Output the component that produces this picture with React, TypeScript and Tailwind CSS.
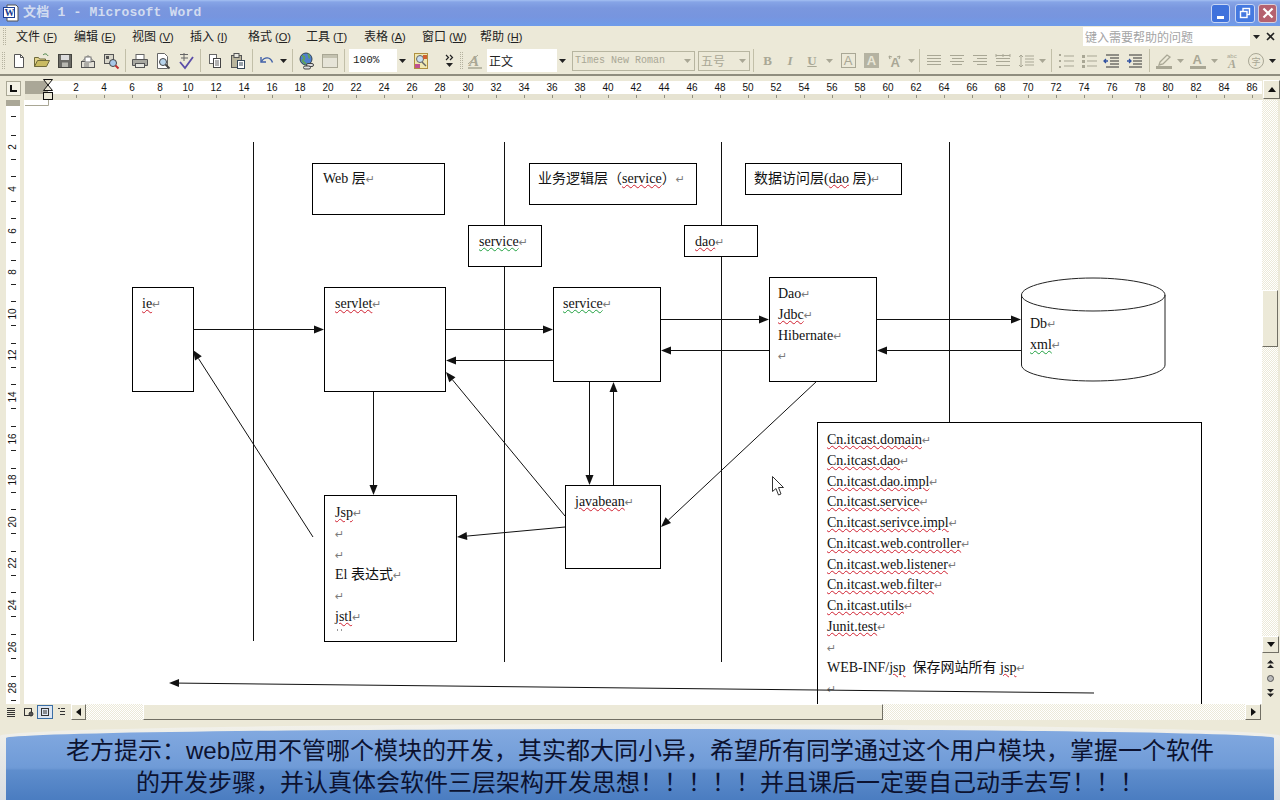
import type { ReactNode } from "react"

const serif = "font-['Liberation_Serif','Noto_Sans_CJK_SC',serif]"
const ui = "font-['Noto_Sans_CJK_SC','Liberation_Sans',sans-serif]"
const arial = "font-['Liberation_Sans','Noto_Sans_CJK_SC',sans-serif]"
const grey = "#a9a795"
const dither = "bg-[repeating-conic-gradient(#ece9d8_0%_25%,#ffffff_0%_50%)] bg-[length:2px_2px]"
const raised = "border border-t-white border-l-white border-r-[#716f64] border-b-[#716f64] bg-[#ece9d8]"

function Mark() {
  return <span className="font-['DejaVu_Sans',sans-serif] text-[11px] text-[#7c7c7c]">↵</span>
}

function Red({ children }: { children: ReactNode }) {
  return <span className="underline decoration-wavy decoration-[#d02030] decoration-1 underline-offset-[1px]">{children}</span>
}

function Green({ children }: { children: ReactNode }) {
  return <span className="underline decoration-wavy decoration-[#20a040] decoration-1 underline-offset-[1px]">{children}</span>
}

function Line({ children }: { children?: ReactNode }) {
  return (
    <div className="h-[20.75px] whitespace-nowrap">
      {children}
      <Mark />
    </div>
  )
}

function Box({ className, children }: { className: string; children: ReactNode }) {
  return (
    <div className={`absolute overflow-hidden border border-black bg-white text-[14px] leading-[20.75px] text-[#111] ${serif} ${className}`}>
      {children}
    </div>
  )
}

function Arrow({ x1, y1, x2, y2 }: { x1: number; y1: number; x2: number; y2: number }) {
  const a = Math.atan2(y2 - y1, x2 - x1)
  const px = x2 - 10 * Math.cos(a)
  const py = y2 - 10 * Math.sin(a)
  const nx = 4 * Math.sin(a)
  const ny = 4 * Math.cos(a)
  return (
    <g>
      <line x1={x1} y1={y1} x2={px} y2={py} stroke="#111" strokeWidth="1" />
      <polygon points={`${x2},${y2} ${px + nx},${py - ny} ${px - nx},${py + ny}`} fill="#111" />
    </g>
  )
}

function Grip({ className = "mx-[3px]" }: { className?: string }) {
  return <div className={`h-[17px] w-[3px] border-x border-dotted border-[#b5b29f] ${className}`} />
}

function Sep() {
  return (
    <div className="flex w-[6px] justify-center">
      <div className="h-[23px] w-px bg-[#c2bfa8]" />
    </div>
  )
}

function Drop({ color = "#222", w = "w-[11px]" }: { color?: string; w?: string }) {
  return (
    <div className={`flex h-[23px] items-center justify-center ${w}`}>
      <svg width="7" height="4" viewBox="0 0 7 4">
        <path d="M0 0h7L3.5 4z" fill={color} />
      </svg>
    </div>
  )
}

function Tool({ children, w = "w-[23px]" }: { children: ReactNode; w?: string }) {
  return (
    <div className={`flex h-[23px] items-center justify-center ${w}`}>
      <svg width="18" height="18" viewBox="0 0 18 18">
        {children}
      </svg>
    </div>
  )
}

function Lines({ rows, color = grey }: { rows: [number, number][]; color?: string }) {
  return (
    <>
      {rows.map(([x, w], i) => (
        <rect key={i} x={x} y={3 + i * 3} width={w} height="1" fill={color} />
      ))}
    </>
  )
}

function TitleBar() {
  return (
    <div className="flex h-[26px] shrink-0 items-center bg-[linear-gradient(#a4c0f2_0,#86a4e6_2px,#7a97de_8px,#7795df_17px,#6f9be9_25px)] pl-[3px] pr-[3px]">
      <svg width="16" height="18" viewBox="0 0 16 18" className="shrink-0">
        <path d="M4 1h9l2 2v14H4z" fill="#fff" stroke="#555" strokeWidth="1" />
        <rect x="0.5" y="3.5" width="11" height="10" fill="#fff" stroke="#1c3f94" />
        <text x="1.5" y="12" fontSize="10" fontWeight="700" fill="#1c3f94" fontFamily="Liberation Serif">W</text>
      </svg>
      <div className="ml-[4px] flex-1 whitespace-nowrap font-['Liberation_Mono','Noto_Sans_CJK_SC',monospace] text-[13px] font-bold tracking-[0.2px] text-[#d2dcf0]">
        文档 1 - Microsoft Word
      </div>
      <div className="flex items-center gap-[3px]">
        <div className="mr-[2px] flex h-[19px] w-[19px] items-end rounded-[3px] border border-[#c8d6f4] bg-[#3f72dc] pb-[3px] pl-[5px]">
          <div className="h-[3px] w-[7px] bg-white" />
        </div>
        <div className="flex h-[19px] w-[20px] items-center justify-center rounded-[3px] border border-[#c8d6f4] bg-[#4479e0]">
          <svg width="12" height="12" viewBox="0 0 12 12" fill="none" stroke="#fff">
            <rect x="4" y="1.5" width="6.5" height="6" strokeWidth="1.4" />
            <rect x="1.5" y="4.5" width="6.5" height="6" fill="#4479e0" strokeWidth="1.4" />
          </svg>
        </div>
        <div className="flex h-[19px] w-[19px] items-center justify-center rounded-[3px] border border-[#d8d0dc] bg-[#b5616f]">
          <svg width="12" height="12" viewBox="0 0 12 12" stroke="#fff" strokeWidth="2.2">
            <path d="M1.5 1.5l9 9M10.5 1.5l-9 9" />
          </svg>
        </div>
      </div>
    </div>
  )
}

const menus = [
  ["文件", "F"],
  ["编辑", "E"],
  ["视图", "V"],
  ["插入", "I"],
  ["格式", "O"],
  ["工具", "T"],
  ["表格", "A"],
  ["窗口", "W"],
  ["帮助", "H"],
]

function MenuBar() {
  return (
    <div className={`flex h-[21px] shrink-0 items-center bg-[#ece9d8] text-[12px] text-[#222] ${ui}`}>
      <Grip />
      <div className="ml-[7px] flex flex-1">
        {menus.map(([t, k]) => (
          <div key={k} className="w-[58px] whitespace-nowrap">
            {t}
            <span className={`ml-[3px] text-[11px] ${arial}`}>
              (<span className="underline">{k}</span>)
            </span>
          </div>
        ))}
      </div>
      <div className="flex h-[19px] w-[167px] items-center bg-white pl-[2px] text-[12px] text-[#a4a4a4]">键入需要帮助的问题</div>
      <Drop w="w-[12px]" />
      <div className="ml-[3px] mr-[4px] flex h-[19px] w-[11px] items-center justify-center">
        <svg width="9" height="9" viewBox="0 0 9 9" stroke="#222" strokeWidth="1.6">
          <path d="M1 1l7 7M8 1L1 8" />
        </svg>
      </div>
    </div>
  )
}

function ToolBar() {
  return (
    <div className={`flex h-[29px] shrink-0 items-center border-b-2 border-[#8f8d7e] bg-[#ece9d8] ${arial}`}>
      <Grip className="mx-[2px]" />
      <Tool>
        <path d="M4.500 2.500h6l3 3v10h-9z" fill="#fff" stroke="#555" />
        <path d="M10.500 2.500v3h3" fill="none" stroke="#555" />
      </Tool>
      <Tool>
        <path d="M1.500 14.500v-9h4l1 1.500h6v2" fill="#e3d48c" stroke="#6f6a3a" />
        <path d="M1.500 14.500l3-6h12l-3 6z" fill="#c9bb62" stroke="#6f6a3a" />
        <path d="M10 3c2-2 4-1 5 1" fill="none" stroke="#3f7f3f" />
      </Tool>
      <Tool>
        <rect x="2.500" y="2.500" width="13" height="13" fill="#6b6b66" stroke="#44443f" />
        <rect x="5" y="3" width="8" height="5" fill="#ddd" />
        <rect x="6" y="10.500" width="6" height="4.500" fill="#b8b8b0" />
      </Tool>
      <Tool>
        <path d="M3 9.500l6-6 6 6" fill="none" stroke="#777" />
        <rect x="2.500" y="9.500" width="13" height="6" fill="#e4e2d8" stroke="#555" />
        <rect x="6" y="5" width="6" height="5" fill="#fff" stroke="#777" />
        <path d="M5 12h5M5 14h5" stroke="#777" />
      </Tool>
      <Tool>
        <rect x="2.500" y="2.500" width="9" height="9" fill="#d8d6ca" stroke="#555" />
        <rect x="4" y="4" width="3" height="3" fill="#555" />
        <circle cx="11" cy="11" r="3.500" fill="#a8c8e8" stroke="#444" />
        <path d="M13.500 13.500l3 3" stroke="#c03030" strokeWidth="2" />
      </Tool>
      <Sep />
      <Tool>
        <rect x="5" y="2.500" width="8" height="5" fill="#fff" stroke="#666" />
        <path d="M1.500 7.500h15v6h-15z" fill="#a8a8a0" stroke="#555" />
        <rect x="4.500" y="11.500" width="9" height="4" fill="#e8e8e0" stroke="#555" />
      </Tool>
      <Tool>
        <path d="M3.500 1.500h7l3 3v12h-10z" fill="#fff" stroke="#666" />
        <circle cx="9" cy="10" r="3.500" fill="#b8d4ec" stroke="#444" />
        <path d="M11.500 12.500l4 4" stroke="#444" strokeWidth="1.800" />
      </Tool>
      <Tool>
        <path d="M3 2.500h8M7 1v5M4 6h7M7 6v3" fill="none" stroke="#666" />
        <path d="M3 10l5 6 8-11" fill="none" stroke="#5a4ca8" strokeWidth="1.800" />
      </Tool>
      <Sep />
      <Tool>
        <rect x="3.500" y="2.500" width="7" height="9" fill="#fff" stroke="#666" />
        <rect x="7.500" y="6.500" width="7" height="9" fill="#fff" stroke="#444" />
        <path d="M9 9h4M9 11h4M9 13h4" stroke="#666" />
      </Tool>
      <Tool>
        <rect x="2.500" y="3.500" width="10" height="12" fill="#b8b49c" stroke="#555" />
        <rect x="5" y="1.500" width="5" height="4" fill="#e8e8e0" stroke="#555" />
        <rect x="8.500" y="8.500" width="7" height="8" fill="#fff" stroke="#345" />
        <path d="M10 11h4M10 13h4" stroke="#345" />
      </Tool>
      <Sep />
      <Tool>
        <path d="M3 5v5h5" fill="none" stroke="#3f5fa8" strokeWidth="1.400" />
        <path d="M3.500 9.500c3-5 9-5 11 1" fill="none" stroke="#3f5fa8" strokeWidth="1.400" />
      </Tool>
      <Drop />
      <Sep />
      <Tool>
        <circle cx="8" cy="7" r="6" fill="#4f7fd0" stroke="#345" />
        <path d="M4 4c3 0 3 3 1 4s2 3 3 4M10 2c2 2 0 3 2 4" fill="none" stroke="#5ea05e" strokeWidth="2" />
        <rect x="8.500" y="11.500" width="7" height="3" rx="1.500" fill="#ddd" stroke="#444" />
        <rect x="5.500" y="14" width="7" height="3" rx="1.500" fill="#ddd" stroke="#444" />
      </Tool>
      <Tool>
        <rect x="1.500" y="2.500" width="15" height="13" fill="#e6e4d8" stroke={grey} />
        <rect x="2" y="3" width="14" height="3" fill="#c4c2b0" />
      </Tool>
      <Sep />
      <div className="ml-[2px] flex h-[23px] w-[48px] items-center bg-white pl-[4px] font-['Liberation_Mono',monospace] text-[11px] text-[#222]">100%</div>
      <Drop w="w-[10px]" />
      <div className="w-[2px]" />
      <Tool>
        <rect x="2.500" y="1.500" width="13" height="15" fill="#f0e8b0" stroke="#b09040" />
        <circle cx="8" cy="7" r="3.500" fill="#c8dcf0" stroke="#666" />
        <path d="M10 10l4 4" stroke="#666" strokeWidth="1.500" />
        <rect x="3" y="12" width="5" height="4" fill="#c05090" />
        <rect x="11" y="3" width="4" height="4" fill="#d06030" />
      </Tool>
      <div className="flex h-[23px] w-[28px] flex-col items-center justify-center pl-[6px] leading-none">
        <svg width="9" height="7" viewBox="0 0 9 7" fill="none" stroke="#222" strokeWidth="1.200">
          <path d="M1 1l2.500 2.500L1 6M5 1l2.500 2.500L5 6" />
        </svg>
        <svg width="7" height="4" viewBox="0 0 7 4" className="mt-[2px]">
          <path d="M0 0h7L3.5 4z" fill="#222" />
        </svg>
      </div>
      <Grip className="" />
      <Tool>
        <text x="3" y="14" fontSize="15" fontStyle="italic" fontWeight="700" fill={grey} fontFamily="Liberation Serif">A</text>
        <path d="M2 16h14" stroke={grey} strokeWidth="1.500" />
        <path d="M2 12L12 3" stroke={grey} />
      </Tool>
      <div className="ml-[1px] flex h-[23px] w-[70px] items-center bg-white pl-[2px] text-[12px] text-[#222]">
        <span className={ui}>正文</span>
      </div>
      <Drop w="w-[10px]" />
      <div className="ml-[5px] flex h-[20px] w-[123px] items-center justify-between border border-[#b7b5a0] pl-[2px] pr-[3px] font-['Liberation_Mono',monospace] text-[10px] text-[#a9a795]">
        Times New Roman
        <svg width="7" height="4" viewBox="0 0 7 4">
          <path d="M0 0h7L3.5 4z" fill={grey} />
        </svg>
      </div>
      <div className={`ml-[3px] flex h-[20px] w-[52px] items-center justify-between border border-[#b7b5a0] pl-[2px] pr-[3px] text-[12px] text-[#a9a795] ${ui}`}>
        五号
        <svg width="7" height="4" viewBox="0 0 7 4">
          <path d="M0 0h7L3.5 4z" fill={grey} />
        </svg>
      </div>
      <Sep />
      <div className={`flex h-[23px] w-[23px] items-center justify-center text-[13px] font-bold text-[#a9a795] ${serif}`}>B</div>
      <div className={`flex h-[23px] w-[22px] items-center justify-center text-[13px] font-bold italic text-[#a9a795] ${serif}`}>I</div>
      <div className={`flex h-[23px] w-[22px] items-center justify-center text-[13px] font-bold text-[#a9a795] underline ${serif}`}>U</div>
      <Drop color={grey} w="w-[13px]" />
      <div className="flex h-[23px] w-[24px] items-center justify-center">
        <div className={`flex h-[15px] w-[15px] items-center justify-center border border-[#a9a795] text-[13px] leading-none text-[#a9a795] ${arial}`}>A</div>
      </div>
      <div className="flex h-[23px] w-[23px] items-center justify-center">
        <div className={`flex h-[15px] w-[15px] items-center justify-center bg-[#b5b3a2] text-[13px] font-bold leading-none text-[#e8e6d6] ${arial}`}>A</div>
      </div>
      <Tool>
        <path d="M3 4l3 1M3 4l1 3M14 4l-3 1M14 4l-1 3" stroke={grey} strokeWidth="1.300" />
        <text x="4.500" y="15" fontSize="13" fontWeight="700" fill={grey} fontFamily="Liberation Sans">A</text>
      </Tool>
      <Drop color={grey} w="w-[10px]" />
      <Sep />
      <Tool>
        <Lines rows={[[2, 14], [2, 14], [2, 14], [2, 14]]} />
      </Tool>
      <Tool>
        <Lines rows={[[2, 14], [4, 10], [2, 14], [4, 10]]} />
      </Tool>
      <Tool>
        <Lines rows={[[2, 14], [6, 10], [2, 14], [6, 10]]} />
      </Tool>
      <Tool>
        <path d="M2 2v3M16 2v3M9 2v3M2 3.500h14M2 13.500h14" stroke={grey} />
        <Lines rows={[[2, 14], [2, 14], [2, 14]]} />
      </Tool>
      <Tool>
        <path d="M4 3v12M2 5l2-2 2 2M2 13l2 2 2-2" fill="none" stroke={grey} />
        <path d="M8 4h9M8 7h9M8 10h9M8 13h9" stroke={grey} />
      </Tool>
      <Drop color={grey} />
      <Sep />
      <Tool>
        <path d="M2 3h2M2 9h2M2 15h2" stroke={grey} strokeWidth="2" />
        <path d="M7 4h10M7 9h10M7 14h10" stroke={grey} />
      </Tool>
      <Tool>
        <rect x="2" y="3" width="3" height="3" fill={grey} />
        <rect x="2" y="8" width="3" height="3" fill={grey} />
        <rect x="2" y="13" width="3" height="3" fill={grey} />
        <path d="M7 4h10M7 9h10M7 14h10" stroke={grey} />
      </Tool>
      <Tool>
        <path d="M5 9h-4M3 7L1 9l2 2" fill="none" stroke="#2f50a0" strokeWidth="1.300" />
        <path d="M3 3h13M7 6h9M7 9h9M7 12h9M3 15h13" stroke="#333" />
      </Tool>
      <Tool>
        <path d="M1 9h4M3 7l2 2-2 2" fill="none" stroke="#2f50a0" strokeWidth="1.300" />
        <path d="M3 3h13M7 6h9M7 9h9M7 12h9M3 15h13" stroke="#333" />
      </Tool>
      <Sep />
      <Tool>
        <path d="M5 10l7-7 3 2-7 7-4 1z" fill="none" stroke={grey} strokeWidth="1.300" />
        <rect x="1" y="14" width="16" height="3" fill={grey} />
      </Tool>
      <Drop color={grey} />
      <Tool>
        <text x="3.500" y="12" fontSize="13" fontWeight="700" fill={grey} fontFamily="Liberation Sans">A</text>
        <rect x="1" y="14" width="16" height="3" fill={grey} />
      </Tool>
      <Drop color={grey} />
      <div className="w-[1px]" />
      <Tool>
        <text x="3" y="6" fontSize="6" fill={grey} fontFamily="Liberation Sans">abc</text>
        <text x="4" y="16" fontSize="12" fontStyle="italic" fontWeight="700" fill={grey} fontFamily="Liberation Serif">A</text>
      </Tool>
      <Tool>
        <circle cx="9" cy="9" r="7.500" fill="none" stroke={grey} />
        <text x="4.500" y="13" fontSize="9" fill={grey} fontFamily="Noto Sans CJK SC">字</text>
      </Tool>
      <Drop w="w-[10px]" />
    </div>
  )
}

const topNums = Array.from({ length: 43 }, (_, i) => (i + 1) * 2)
const sideNums = Array.from({ length: 14 }, (_, i) => (i + 1) * 2)

function TopRuler() {
  return (
    <div className={`flex h-[24px] shrink-0 bg-[#ece9d8] ${arial}`}>
      <div className="ml-[6px] mt-[5px] flex h-[15px] w-[15px] items-center justify-center border border-[#a9a795] bg-[#f4f2e6]">
        <svg width="7" height="7" viewBox="0 0 7 7">
          <path d="M0 0h2v5h5v2H0z" fill="#111" />
        </svg>
      </div>
      <div className="relative ml-[4px] mt-[5px] flex h-[19px] w-[1237px] flex-col">
        <div className="flex h-[13px]">
          <div className="h-full w-[23px] shrink-0 bg-[#aaa797]" />
          <div className="flex h-full flex-1 overflow-hidden bg-white pl-[14px]">
            {topNums.map((n) => (
              <div key={n} className="w-[28px] shrink-0 text-center text-[10px] leading-[13px] text-[#111]">
                {n}
              </div>
            ))}
          </div>
        </div>
        <div className="flex h-[6px] overflow-hidden bg-[#e6e3d2] pl-[37px]">
          {topNums.map((n) => (
            <div key={n} className="flex w-[28px] shrink-0 justify-center">
              <div className="mt-[1px] h-[3px] w-px bg-[#8f8d7e]" />
            </div>
          ))}
        </div>
        <svg width="14" height="24" viewBox="0 0 14 24" className="absolute left-[16px] -top-[2px]">
          <path d="M2.500 0.500h9L2.500 11.500h9z" fill="#ece9d8" stroke="#111" />
          <rect x="2.500" y="13.500" width="9" height="7" fill="#ece9d8" stroke="#111" />
        </svg>
      </div>
      <div className={`ml-[1px] mt-[4px] flex h-[19px] w-[17px] items-center justify-center ${raised}`}>
        <svg width="8" height="5" viewBox="0 0 8 5">
          <path d="M4 0l4 5H0z" fill="#111" />
        </svg>
      </div>
    </div>
  )
}

function SideRuler() {
  return (
    <div className={`flex w-[24px] shrink-0 overflow-hidden bg-[#ece9d8] pl-[6px] ${arial}`}>
      <div className="flex w-[14px] flex-col items-center bg-white">
        <div className="h-[6px] w-full shrink-0 bg-[#aaa797]" />
        <div className="flex h-[20.6px] shrink-0 items-center">
          <div className="h-px w-[5px] bg-[#222]" />
        </div>
        {sideNums.map((n) => (
          <div key={n} className="flex h-[41.6px] shrink-0 flex-col items-center justify-around py-[5px]">
            <div className="h-px w-[5px] bg-[#222]" />
            <div className="-rotate-90 text-[10px] leading-none text-[#111]">{n}</div>
            <div className="h-px w-[5px] bg-[#222]" />
          </div>
        ))}
      </div>
    </div>
  )
}

function Diagram() {
  return (
    <div className="relative flex-1 overflow-hidden bg-white">
      <svg viewBox="24 100 1238 604" width="1238" height="604" className="absolute inset-0">
        <path d="M25 105.500H48.500V100" fill="none" stroke="#a9a795" />
        <path d="M253.500 142V641M504.500 142V662M721.500 142V662M949.500 142V422" stroke="#111" />
      </svg>

      <Box className="left-[288px] top-[63px] h-[52px] w-[133px] pl-[10px] pt-[5px]">
        <Line>Web 层</Line>
      </Box>
      <Box className="left-[505px] top-[63px] h-[42px] w-[168px] pl-[8px] pt-[5px]">
        <Line>
          业务逻辑层（<Red>service</Red>）
        </Line>
      </Box>
      <Box className="left-[721px] top-[63px] h-[32px] w-[157px] pl-[8px] pt-[5px]">
        <Line>
          数据访问层(<Red>dao</Red> 层)
        </Line>
      </Box>
      <Box className="left-[444px] top-[125px] h-[42px] w-[74px] pl-[10px] pt-[6px]">
        <Line>
          <Green>service</Green>
        </Line>
      </Box>
      <Box className="left-[660px] top-[125px] h-[32px] w-[74px] pl-[10px] pt-[6px]">
        <Line>
          <Red>dao</Red>
        </Line>
      </Box>
      <Box className="left-[108px] top-[187px] h-[105px] w-[62px] pl-[9px] pt-[6px]">
        <Line>
          <Red>ie</Red>
        </Line>
      </Box>
      <Box className="left-[300px] top-[187px] h-[105px] w-[122px] pl-[10px] pt-[6px]">
        <Line>
          <Red>servlet</Red>
        </Line>
      </Box>
      <Box className="left-[529px] top-[187px] h-[95px] w-[108px] pl-[9px] pt-[6px]">
        <Line>
          <Green>service</Green>
        </Line>
      </Box>
      <Box className="left-[745px] top-[177px] h-[105px] w-[108px] pl-[8px] pt-[6px]">
        <Line>Dao</Line>
        <Line>
          <Red>Jdbc</Red>
        </Line>
        <Line>Hibernate</Line>
        <Line />
      </Box>
      <Box className="left-[541px] top-[385px] h-[84px] w-[96px] pl-[9px] pt-[6px]">
        <Line>
          <Red>javabean</Red>
        </Line>
      </Box>
      <Box className="left-[300px] top-[395px] h-[147px] w-[133px] pl-[10px] pt-[7px]">
        <Line>
          <Red>Jsp</Red>
        </Line>
        <Line />
        <Line />
        <Line>El 表达式</Line>
        <Line />
        <Line>
          <Red>jstl</Red>
        </Line>
        <div className="ml-[2px] mt-[1px] flex gap-[3px]">
          <div className="h-[2px] w-px bg-[#999]" />
          <div className="h-[2px] w-px bg-[#999]" />
        </div>
      </Box>
      <Box className="left-[793px] top-[322px] h-[300px] w-[385px] pl-[9px] pt-[7px]">
        {[
          "Cn.itcast.domain",
          "Cn.itcast.dao",
          "Cn.itcast.dao.impl",
          "Cn.itcast.service",
          "Cn.itcast.serivce.impl",
          "Cn.itcast.web.controller",
          "Cn.itcast.web.listener",
          "Cn.itcast.web.filter",
          "Cn.itcast.utils",
          "Junit.test",
        ].map((t) => (
          <Line key={t}>
            <Red>{t}</Red>
          </Line>
        ))}
        <Line />
        <Line>
          WEB-INF/<Red>jsp</Red>&nbsp;&nbsp;保存网站所有 <Red>jsp</Red>
        </Line>
        <Line />
      </Box>

      <svg viewBox="24 100 1238 604" width="1238" height="604" className="pointer-events-none absolute inset-0">
        <path
          d="M1021.500 295V365C1021.500 374 1053 381 1093 381S1165 374 1165 365V295C1165 286 1133 278 1093 278S1021.500 286 1021.500 295C1021.500 304 1053 311 1093 311S1165 304 1165 295"
          fill="#fff"
          stroke="#222"
        />
        <Arrow x1={193} y1={329.500} x2={324} y2={329.500} />
        <Arrow x1={446} y1={329.500} x2={553} y2={329.500} />
        <Arrow x1={553} y1={360.500} x2={446} y2={360.500} />
        <Arrow x1={661} y1={319.500} x2={769} y2={319.500} />
        <Arrow x1={769} y1={350.500} x2={661} y2={350.500} />
        <Arrow x1={877} y1={319.500} x2={1021} y2={319.500} />
        <Arrow x1={1021} y1={350.500} x2={877} y2={350.500} />
        <Arrow x1={589.500} y1={382} x2={589.500} y2={485} />
        <Arrow x1={613.500} y1={485} x2={613.500} y2={382} />
        <Arrow x1={373.500} y1={392} x2={373.500} y2={495} />
        <Arrow x1={313} y1={537} x2={193} y2={350} />
        <Arrow x1={565} y1={516} x2={446} y2={372} />
        <Arrow x1={565} y1={527} x2={457} y2={537} />
        <Arrow x1={817} y1={381} x2={661} y2={527} />
        <Arrow x1={1094} y1={693} x2={169} y2={683} />
        <path d="M772.500 476.500v15l3.500-3 2.500 6.500 2.500-1-2.500-6.500h5z" fill="#fff" stroke="#333" />
      </svg>

      <div className={`absolute left-[1006px] top-[214px] text-[14px] leading-[20.75px] text-[#111] ${serif}`}>
        <Line>Db</Line>
        <Line>
          <Green>xml</Green>
        </Line>
      </div>
    </div>
  )
}

function VScroll() {
  return (
    <div className="flex w-[18px] shrink-0 flex-col bg-[#ece9d8]">
      <div className={`w-[16px] flex-1 ${dither}`}>
        <div className={`mt-[190px] h-[57px] w-[16px] ${raised}`} />
      </div>
      <div className={`flex h-[17px] w-[17px] items-center justify-center ${raised}`}>
        <svg width="8" height="5" viewBox="0 0 8 5">
          <path d="M0 0h8L4 5z" fill="#111" />
        </svg>
      </div>
      <div className="flex h-[51px] w-[17px] flex-col items-center justify-around py-[3px]">
        <svg width="7" height="8" viewBox="0 0 7 8">
          <path d="M0 3.500L3.500 0 7 3.500zM0 8l3.500-3.500L7 8z" fill="#222" />
        </svg>
        <div className="h-[7px] w-[7px] rounded-full border border-[#555] bg-[#bbb]" />
        <svg width="7" height="8" viewBox="0 0 7 8">
          <path d="M0 0h7L3.500 3.500zM0 4.500h7L3.500 8z" fill="#222" />
        </svg>
      </div>
    </div>
  )
}

function HScroll() {
  return (
    <div className="flex h-[16px] shrink-0 bg-[#ece9d8]">
      <div className="flex w-[71px] items-center pl-[6px]">
        <svg width="60" height="14" viewBox="0 0 60 14" fill="none" stroke="#333">
          <path d="M1 3.500h8M1 5.500h8M1 7.500h8M1 9.500h8M1 11.500h8" />
          <rect x="18.500" y="3.500" width="7" height="7" />
          <circle cx="25" cy="9" r="2" fill="#555" />
          <rect x="31.500" y="0.500" width="15" height="13" fill="#dde6f2" stroke="#3a6ea5" />
          <rect x="35.500" y="3.500" width="7" height="7" />
          <path d="M37 6h4M37 8h4" />
          <path d="M52 3.500h2M55 3.500h4M54 6.500h5M54 9.500h5" />
        </svg>
      </div>
      <div className={`flex w-[15px] items-center justify-center ${raised}`}>
        <svg width="5" height="8" viewBox="0 0 5 8">
          <path d="M5 0v8L0 4z" fill="#111" />
        </svg>
      </div>
      <div className={`w-[57px] ${dither}`} />
      <div className={`w-[740px] ${raised}`} />
      <div className={`w-[362px] ${dither}`} />
      <div className={`flex w-[16px] items-center justify-center ${raised}`}>
        <svg width="5" height="8" viewBox="0 0 5 8">
          <path d="M0 0v8l5-4z" fill="#111" />
        </svg>
      </div>
    </div>
  )
}

function Banner() {
  return (
    <div className="h-[80px] shrink-0 bg-[#ece9d8] pt-[4px]">
      <div className="h-full rounded-t-[640px_12px] bg-[linear-gradient(#f2f1ea,#d8dde2)] px-[6px] pt-[5px]">
        <div className={`h-full rounded-t-[634px_9px] bg-[linear-gradient(#82a9e0_0,#6f9bd7_38px,#6a96d3_40px,#5f8ecd_41px,#4b7dc1_70px)] pt-[6px] text-center text-[24px] leading-[32px] text-[#0c1230] ${arial}`}>
          <div className="whitespace-nowrap">老方提示：web应用不管哪个模块的开发，其实都大同小异，希望所有同学通过这个用户模块，掌握一个软件</div>
          <div className="whitespace-nowrap">的开发步骤，并认真体会软件三层架构开发思想！！！！！并且课后一定要自己动手去写！！！</div>
        </div>
      </div>
    </div>
  )
}

export default function App() {
  return (
    <div className="flex h-[800px] w-[1280px] flex-col overflow-hidden bg-[#ece9d8]">
      <TitleBar />
      <MenuBar />
      <ToolBar />
      <TopRuler />
      <div className="flex h-[604px] shrink-0">
        <SideRuler />
        <Diagram />
        <VScroll />
      </div>
      <HScroll />
      <Banner />
    </div>
  )
}
